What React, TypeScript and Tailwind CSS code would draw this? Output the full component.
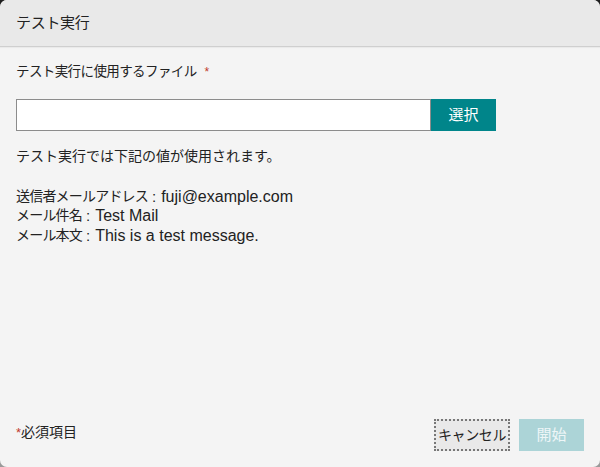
const font = { fontFamily: '"Liberation Sans", "Noto Sans CJK JP", sans-serif' }

function Row({ label, value }: { label: string; value: string }) {
  return (
    <p className="flex h-[19.5px] items-center">
      <span className="text-[14px] tracking-[-0.8px]">{label}</span>
      <span className="ml-[4px] mr-[5px] text-[15px]">:</span>
      <span className="text-[16px]">{value}</span>
    </p>
  )
}

export default function App() {
  return (
    <div className="h-[467px] w-[600px] bg-gradient-to-b from-[#1e1e1e] to-[#9a9a9a]" style={font}>
      <div className="flex h-full flex-col overflow-hidden rounded-[7px] bg-[#f4f4f4] text-[#222]">
        <header className="flex h-[47px] shrink-0 items-center border-b border-[#cfcfcf] bg-[#e9e9e9] px-4 text-[15px] tracking-[-0.3px] shadow-[0_1px_1px_rgba(0,0,0,0.04)]">
          テスト実行
        </header>

        <main className="flex-1 px-4 pt-[15px]">
          <p className="text-[13.5px] leading-[20px] tracking-[-0.6px]">
            テスト実行に使用するファイル
            <span className="ml-2 text-[12px] text-[#c0392b]">*</span>
          </p>
          <div className="mt-[17px] flex h-8">
            <input className="h-8 w-[415px] border border-[#8c8c8c] bg-white px-2 text-sm outline-none" />
            <button className="h-8 w-[65px] bg-[#00858a] text-[15px] text-white">選択</button>
          </div>
          <div className="mt-4 text-[14px] leading-[19.5px]">
            <p>テスト実行では下記の値が使用されます。</p>
            <div className="mt-[20px]">
              <Row label="送信者メールアドレス" value="fuji@example.com" />
              <Row label="メール件名" value="Test Mail" />
              <Row label="メール本文" value="This is a test message." />
            </div>
          </div>
        </main>

        <footer className="flex items-center justify-between px-4 pb-4">
          <p className="mb-[6px] text-[14px]">
            <span className="text-[13px] text-[#c0392b]">*</span>必須項目
          </p>
          <div className="flex gap-[9px]">
            <button className="h-8 w-[76px] border-2 border-dotted border-[#777] bg-[#e9e9e9] text-[14px] tracking-[-0.4px] text-[#222]">
              キャンセル
            </button>
            <button className="h-8 w-[65px] bg-[#acd4d7] text-[15px] text-[#eef6f7]" disabled>
              開始
            </button>
          </div>
        </footer>
      </div>
    </div>
  )
}
